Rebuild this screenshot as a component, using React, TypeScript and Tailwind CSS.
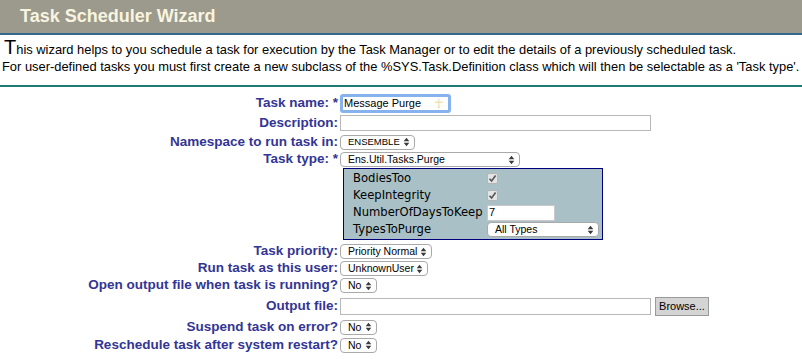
import type { ReactNode } from 'react';

const Arrows = () => (
  <svg width="7" height="10" viewBox="0 0 7 10" className="shrink-0">
    <path d="M3.5 0.8 L6.3 4.2 H0.7Z M3.5 9.2 L0.7 5.8 H6.3Z" fill="#3a3a3a" />
  </svg>
);

const Select = ({ value, className }: { value: string; className: string }) => (
  <div
    className={`flex h-[15px] items-center justify-between whitespace-nowrap rounded-[4px] border border-[#a9a9a9] bg-white pl-[7px] pr-[4px] leading-none text-black ${className}`}
  >
    <span>{value}</span>
    <Arrows />
  </div>
);

const Check = () => (
  <div className="flex h-[11px] w-[11px] items-center justify-center rounded-[2px] border border-[#b5b5b5] bg-[#e4e4e4]">
    <svg width="9" height="9" viewBox="0 0 9 9">
      <path d="M1.5 4.8 L3.6 7 L7.6 1.6" stroke="#555" strokeWidth="1.6" fill="none" />
    </svg>
  </div>
);

const Row = ({ label, className, children }: { label: string; className: string; children: ReactNode }) => (
  <div className={`flex items-center ${className}`}>
    <div className="w-[340px] shrink-0 whitespace-nowrap pr-[2px] text-right text-[13.5px] font-bold text-[#333594]">
      {label}
    </div>
    <div className="flex items-center">{children}</div>
  </div>
);

export default function App() {
  return (
    <div className="h-[359px] w-[802px] overflow-hidden bg-white font-['Liberation_Sans',Arial,sans-serif] text-black">
      <header className="flex h-[35px] items-center border-b-2 border-[#33688c] bg-[#9c9a8c] pl-[20px]">
        <h1 className="text-[18px] font-bold text-[#f8f4e0]">Task Scheduler Wizard</h1>
      </header>

      <div className="whitespace-nowrap pt-[3px] text-[12.9px]">
        <p className="h-[19px] pl-[4px] leading-[19px]">
          <span className="text-[20px]">T</span>his wizard helps to you schedule a task for execution by the Task Manager or to edit the
          details of a previously scheduled task.
        </p>
        <p className="h-[19px] pl-[2px] leading-[19px]">
          For user-defined tasks you must first create a new subclass of the %SYS.Task.Definition class which will then be
          selectable as a 'Task type'.
        </p>
      </div>

      <div className="mt-[9px] h-[2px] bg-[#1f7a70]" />

      <div className="pt-[6px]">
        <Row label="Task name: *" className="h-[21px]">
          <div className="flex h-[19px] w-[111px] items-center justify-between rounded-[3px] border-[3px] border-[#86b3ee] bg-white pl-[1px] pr-[4px] text-[11px]">
            <span>Message Purge</span>
            <span className="text-[13px] leading-none text-[#e6dc9c]">☥</span>
          </div>
        </Row>
        <Row label="Description:" className="h-[18px]">
          <div className="h-[16px] w-[311px] border border-[#b8b8b8] bg-white" />
        </Row>
        <Row label="Namespace to run task in:" className="h-[20px]">
          <Select value="ENSEMBLE" className="w-[75px] text-[9.5px]" />
        </Row>
        <Row label="Task type: *" className="h-[15px]">
          <Select value="Ens.Util.Tasks.Purge" className="w-[180px] text-[10.5px]" />
        </Row>

        <div className="ml-[343px] mt-[1px] w-[260px] border border-[#00007f] bg-[#a9c1c6] py-[1px] pl-[9px] pr-[3px] font-['DejaVu_Sans',Verdana,sans-serif] text-[11.6px] leading-none">
          <div className="flex h-[17px] items-center">
            <span className="w-[134px]">BodiesToo</span>
            <Check />
          </div>
          <div className="flex h-[17px] items-center">
            <span className="w-[134px]">KeepIntegrity</span>
            <Check />
          </div>
          <div className="flex h-[17px] items-center">
            <span className="w-[134px]">NumberOfDaysToKeep</span>
            <div className="flex h-[16px] w-[68px] items-center border border-[#c9c9c9] bg-white pl-[1px] font-['Liberation_Sans',Arial,sans-serif] text-[11px]">
              7
            </div>
          </div>
          <div className="flex h-[17px] items-center">
            <span className="w-[134px]">TypesToPurge</span>
            <Select value="All Types" className="w-[112px] font-['Liberation_Sans',Arial,sans-serif] text-[10.5px]" />
          </div>
        </div>

        <div className="pt-[3px]">
          <Row label="Task priority:" className="h-[17px]">
            <Select value="Priority Normal" className="w-[92px] text-[10.5px]" />
          </Row>
          <Row label="Run task as this user:" className="h-[17px]">
            <Select value="UnknownUser" className="w-[88px] text-[10.5px]" />
          </Row>
          <Row label="Open output file when task is running?" className="h-[17px]">
            <Select value="No" className="w-[37px] text-[10.5px]" />
          </Row>
          <Row label="Output file:" className="h-[24px]">
            <div className="h-[17px] w-[311px] border border-[#b8b8b8] bg-white" />
            <button className="ml-[4px] h-[19px] w-[54px] border border-[#9a9a9a] bg-[#d4d4d4] text-[11px] text-black">
              Browse...
            </button>
          </Row>
          <Row label="Suspend task on error?" className="h-[18px]">
            <Select value="No" className="w-[37px] text-[10.5px]" />
          </Row>
          <Row label="Reschedule task after system restart?" className="h-[18px]">
            <Select value="No" className="w-[37px] text-[10.5px]" />
          </Row>
        </div>
      </div>
    </div>
  );
}
